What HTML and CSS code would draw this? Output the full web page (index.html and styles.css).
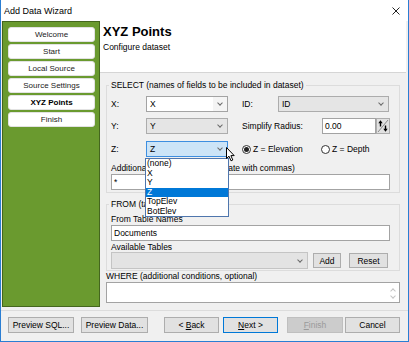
FILE: index.html
```html
<!DOCTYPE html>
<html>
<head>
    <title>Add Data Wizard</title>
    <link rel="stylesheet" href="styles.css">
</head>
<body>
<div id="window">
    <div id="titlebar">
        <span id="title">Add Data Wizard</span>
        <svg class="close" width="8" height="8" viewBox="0 0 8 8"><path d="M0.5 0.5 L7.5 7.5 M7.5 0.5 L0.5 7.5" stroke="#222" stroke-width="1"/></svg>
    </div>
    <div id="body">
        <div id="steps">
            <div class="step">Welcome</div>
            <div class="step">Start</div>
            <div class="step">Local Source</div>
            <div class="step">Source Settings</div>
            <div class="step current">XYZ Points</div>
            <div class="step">Finish</div>
        </div>
        <div id="main">
            <div id="header">
                <div id="page-title">XYZ Points</div>
                <div id="page-sub">Configure dataset</div>
            </div>
            <div id="form">
                <fieldset class="group select-group">
                    <legend>SELECT (names of fields to be included in dataset)</legend>
                    <div class="row">
                        <span class="axis">X:</span>
                        <div class="combo edit short"><span class="value">X</span><span class="drop"><i class="arrow"></i></span></div>
                        <span class="side-label id-label">ID:</span>
                        <div class="combo long"><span class="value">ID</span><i class="arrow"></i></div>
                    </div>
                    <div class="row">
                        <span class="axis">Y:</span>
                        <div class="combo short"><span class="value">Y</span><i class="arrow"></i></div>
                        <span class="side-label radius-label">Simplify Radius:</span>
                        <div class="field radius">0.00</div>
                        <div class="spin">
                            <svg width="12" height="14" viewBox="0 0 12 14">
                                <path d="M1 13 L11 1" stroke="#8a8a8a" stroke-width="1"/>
                                <path d="M3.5 3 V7.5" stroke="#000" stroke-width="1.4"/>
                                <path d="M1.3 4.2 L3.5 1.2 L5.7 4.2 Z" fill="#000"/>
                                <path d="M8.5 6.5 V11" stroke="#000" stroke-width="1.4"/>
                                <path d="M6.3 9.8 L8.5 12.8 L10.7 9.8 Z" fill="#000"/>
                            </svg>
                        </div>
                    </div>
                    <div class="row z-row">
                        <span class="axis">Z:</span>
                        <div class="combo short focused">
                            <span class="value">Z</span><i class="arrow"></i>
                            <div class="dropdown">
                                <div class="option">(none)</div>
                                <div class="option">X</div>
                                <div class="option">Y</div>
                                <div class="option selected">Z</div>
                                <div class="option">TopElev</div>
                                <div class="option">BotElev</div>
                            </div>
                            <svg class="cursor" width="10" height="15" viewBox="0 0 10 15">
                                <path d="M0.5 0.5 V11.5 L3 9.2 L5 13.8 L6.8 13 L4.9 8.6 H8.2 Z" fill="#fff" stroke="#000" stroke-width="1" stroke-linejoin="round"/>
                            </svg>
                        </div>
                        <label class="radio elevation"><span class="dot on"></span>Z = Elevation</label>
                        <label class="radio"><span class="dot"></span>Z = Depth</label>
                    </div>
                    <div class="caption extra-caption">Additional fields (* for all, separate with commas)</div>
                    <div class="field wide">*</div>
                </fieldset>

                <fieldset class="group from-group">
                    <legend>FROM (table names)</legend>
                    <div class="caption">From Table Names</div>
                    <div class="field wide">Documents</div>
                    <div class="caption">Available Tables</div>
                    <div class="row tables-row">
                        <div class="combo tables"><span class="value"></span><i class="arrow"></i></div>
                        <div class="btn add">Add</div>
                        <div class="btn reset">Reset</div>
                    </div>
                </fieldset>

                <div class="caption where-caption">WHERE (additional conditions, optional)</div>
                <div class="where">
                    <div class="scroll">
                        <i class="arrow up"></i>
                        <i class="arrow"></i>
                    </div>
                </div>
            </div>
        </div>
    </div>
    <div id="footer">
        <div class="btn-group">
            <div class="btn preview-sql">Preview SQL...</div>
            <div class="btn preview-data">Preview Data...</div>
        </div>
        <div class="btn-group nav">
            <div class="btn step-btn">&lt;&nbsp;<u>B</u>ack</div>
            <div class="btn step-btn default"><u>N</u>ext&nbsp;&gt;</div>
        </div>
        <div class="btn-group end">
            <div class="btn step-btn disabled"><u>F</u>inish</div>
            <div class="btn step-btn">Cancel</div>
        </div>
    </div>
</div>
</body>
</html>
```
FILE: styles.css
```css
* {
    box-sizing: border-box;
}
body {
    margin: 0;
    font-family: "Liberation Sans", Arial, sans-serif;
    font-size: 8.5px;
    line-height: 10px;
    color: #000;
}
#window {
    width: 409px;
    height: 342px;
    background-color: #f0f0f0;
    border: 1px solid #2a7ed3;
    border-top: none;
    display: flex;
    flex-direction: column;
}
#titlebar {
    flex: none;
    height: 21px;
    background-color: #fff;
    display: flex;
    align-items: center;
    justify-content: space-between;
    padding: 0 8px 0 3px;
    font-size: 9px;
}
#body {
    flex: none;
    height: 287px;
    display: flex;
}
#steps {
    flex: none;
    width: 98px;
    height: 286px;
    margin-left: 1px;
    background-color: #6a9a2f;
    border: 1px solid #44661e;
    padding: 5px 4px 0 5px;
    display: flex;
    flex-direction: column;
    gap: 2px;
}
.step {
    height: 15px;
    background-color: #fff;
    border: 1px solid #e2e2e2;
    border-radius: 3px;
    text-align: center;
    font-size: 8px;
    line-height: 13px;
    color: #222;
}
.step.current {
    font-weight: bold;
    color: #000;
}
#main {
    flex: 1;
    margin-right: 3px;
    display: flex;
    flex-direction: column;
}
#header {
    flex: none;
    height: 52px;
    background-color: #fff;
    border-bottom: 1px solid #d5d5d5;
    padding: 3px 3px 0;
}
#page-title {
    font-size: 13px;
    font-weight: bold;
    line-height: 16px;
}
#page-sub {
    margin-top: 2px;
}
#form {
    flex: 1;
    padding: 7px 6px 0 6px;
}
.group {
    margin: 0;
    min-width: 0;
    border: 1px solid #dcdcdc;
    padding: 6px 9px 2px 4px;
}
.group legend {
    padding: 0 2px;
    margin-left: -2px;
    line-height: 10px;
}
.from-group {
    margin-top: 6px;
    padding-top: 5px;
    padding-bottom: 1px;
}
.row {
    display: flex;
    align-items: center;
    height: 16px;
}
.row + .row {
    margin-top: 6px;
}
.row.z-row {
    margin-top: 7px;
}
.axis {
    width: 35px;
}
.side-label {
    margin-left: 14px;
}
.id-label {
    width: 36px;
}
.radius-label {
    width: 80px;
}
.combo {
    height: 16px;
    border: 1px solid #acacac;
    background-color: #e5e5e5;
    padding-left: 3px;
    display: flex;
    align-items: center;
}
.combo .value {
    flex: 1;
}
.combo.short {
    width: 82px;
}
.combo.long {
    width: 111px;
}
.combo.edit {
    background-color: #fff;
    border-color: #a3a3a3;
    align-items: stretch;
}
.combo.edit .value {
    line-height: 14px;
}
.drop {
    width: 14px;
    background-color: #f4f4f4;
    display: flex;
    align-items: center;
    justify-content: center;
}
.drop .arrow {
    margin: -2px 0 0 0;
}
.arrow {
    display: block;
    width: 4px;
    height: 4px;
    border-right: 1px solid #6a6a6a;
    border-bottom: 1px solid #6a6a6a;
    transform: rotate(45deg);
    margin: -2px 5px 0 0;
}
.arrow.up {
    transform: rotate(-135deg);
}
.combo.focused {
    position: relative;
    background-color: #cce4f7;
    border-color: #3d8ee0;
}
.dropdown {
    position: absolute;
    z-index: 2;
    top: 16px;
    left: -2px;
    width: 84px;
    background-color: #fff;
    border: 1px solid #4f76ad;
}
.option {
    height: 9.5px;
    line-height: 9.5px;
    padding-left: 1px;
}
.option.selected {
    background-color: #0078d7;
    color: #fff;
}
.cursor {
    position: absolute;
    z-index: 3;
    left: 79px;
    top: 5px;
}
.field {
    height: 16px;
    border: 1px solid #a3a3a3;
    background-color: #fff;
    padding-left: 2px;
    line-height: 14px;
}
.field.radius {
    width: 54px;
}
.field.wide {
    margin-top: 1px;
}
.spin {
    width: 14px;
    height: 16px;
    border: 1px solid #adadad;
    background-color: #e1e1e1;
    display: flex;
    align-items: center;
    justify-content: center;
}
.radio {
    display: flex;
    align-items: center;
    gap: 2px;
}
.radio.elevation {
    width: 79px;
    margin-left: 14px;
}
.dot {
    width: 9px;
    height: 9px;
    border: 1px solid #333;
    border-radius: 50%;
    background-color: #fff;
}
.dot.on::after {
    content: "";
    display: block;
    width: 5px;
    height: 5px;
    margin: 1px;
    border-radius: 50%;
    background-color: #222;
}
.caption {
    margin-top: 1px;
}
.extra-caption {
    margin-top: 6px;
}
.from-group .caption:first-of-type {
    margin-top: 0;
}
.tables-row {
    height: 17px;
    margin-top: 0;
}
.combo.tables {
    width: 197px;
    height: 17px;
    background-color: #e3e3e3;
    border-color: #c4c4c4;
}
.btn {
    height: 16px;
    border: 1px solid #adadad;
    background-color: #e1e1e1;
    display: flex;
    align-items: center;
    justify-content: center;
}
.btn.add {
    width: 28px;
    height: 15px;
    margin-left: 5px;
}
.btn.reset {
    width: 39px;
    height: 15px;
    margin-left: 8px;
}
.where-caption {
    margin-top: 0;
}
.where {
    margin-top: 1px;
    height: 21px;
    border: 1px solid #a3a3a3;
    background-color: #fff;
    display: flex;
    justify-content: flex-end;
}
.scroll {
    width: 12px;
    display: flex;
    flex-direction: column;
    align-items: center;
    justify-content: space-between;
    padding: 6px 0 4px;
}
.scroll .arrow {
    margin: 0;
    border-color: #c4c4c4;
}
#footer {
    flex: none;
    margin-top: 2px;
    border-top: 1px solid #dcdcdc;
    padding: 6px 7px 0;
    display: flex;
}
.btn-group {
    display: flex;
    gap: 7px;
}
.btn-group.nav {
    margin-left: 16px;
    gap: 4px;
}
.btn-group.end {
    margin-left: 9px;
    gap: 2px;
}
.preview-sql {
    width: 66px;
}
.preview-data {
    width: 67px;
}
.step-btn {
    width: 55px;
}
.step-btn.default {
    border-color: #0078d7;
}
.step-btn.disabled {
    width: 56px;
    background-color: #cccccc;
    border-color: #bfbfbf;
    color: #9a9a9a;
}
```
